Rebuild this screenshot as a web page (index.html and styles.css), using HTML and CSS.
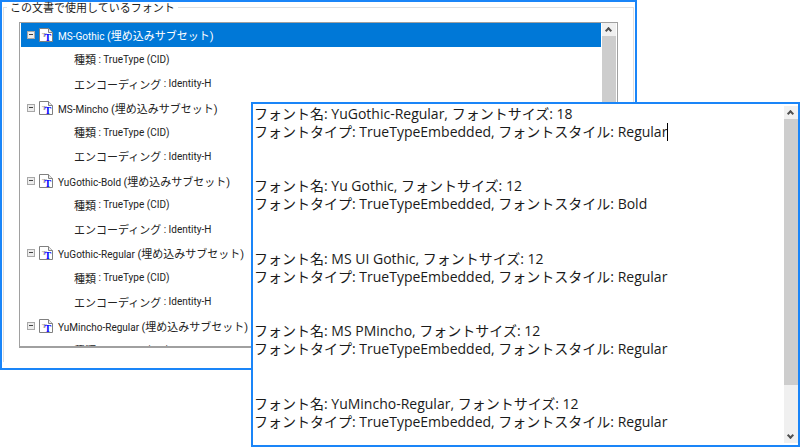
FILE: index.html
```html
<!DOCTYPE html>
<html lang="ja">
<head>
    <meta charset="UTF-8">
    <title>フォント</title>
    <link rel="stylesheet" href="styles.css">
</head>
<body>
    <svg class="defs" width="0" height="0">
        <symbol id="font-icon" viewBox="0 0 14 14">
            <path d="M.5 .5H9.5L13.5 4.5V13.5H.5Z" fill="#fff" stroke="#808080"/>
            <path d="M9.5 .5V4.5H13.5" fill="#e8e8e8" stroke="#808080"/>
            <text x="3" y="9" class="icon-t-back">T</text>
            <text x="5.5" y="12.5" class="icon-t">T</text>
        </symbol>
    </svg>

    <section class="window back-window">
        <fieldset class="group">
            <legend>この文書で使用しているフォント</legend>
            <div class="tree">
                <div class="tree-rows">
                    <div class="row selected"><span class="toggle"></span><svg class="icon"><use href="#font-icon"/></svg><span class="name">MS-Gothic <b>(埋め込みサブセット)</b></span></div>
                    <div class="row child"><b>種類</b> : TrueType (CID)</div>
                    <div class="row child"><b>エンコーディング</b> : Identity-H</div>
                    <div class="row"><span class="toggle"></span><svg class="icon"><use href="#font-icon"/></svg><span class="name">MS-Mincho <b>(埋め込みサブセット)</b></span></div>
                    <div class="row child"><b>種類</b> : TrueType (CID)</div>
                    <div class="row child"><b>エンコーディング</b> : Identity-H</div>
                    <div class="row"><span class="toggle"></span><svg class="icon"><use href="#font-icon"/></svg><span class="name">YuGothic-Bold <b>(埋め込みサブセット)</b></span></div>
                    <div class="row child"><b>種類</b> : TrueType (CID)</div>
                    <div class="row child"><b>エンコーディング</b> : Identity-H</div>
                    <div class="row"><span class="toggle"></span><svg class="icon"><use href="#font-icon"/></svg><span class="name">YuGothic-Regular <b>(埋め込みサブセット)</b></span></div>
                    <div class="row child"><b>種類</b> : TrueType (CID)</div>
                    <div class="row child"><b>エンコーディング</b> : Identity-H</div>
                    <div class="row"><span class="toggle"></span><svg class="icon"><use href="#font-icon"/></svg><span class="name">YuMincho-Regular <b>(埋め込みサブセット)</b></span></div>
                    <div class="row child"><b>種類</b> : TrueType (CID)</div>
                </div>
                <div class="scrollbar">
                    <span class="arrow up"></span>
                    <span class="thumb tree-thumb"></span>
                </div>
            </div>
        </fieldset>
    </section>

    <section class="window front-window">
        <div class="output">
            <p>フォント名: YuGothic-Regular, フォントサイズ: 18<br>フォントタイプ: TrueTypeEmbedded, フォントスタイル: Regular<span class="caret"></span></p>
            <p>フォント名: Yu Gothic, フォントサイズ: 12<br>フォントタイプ: TrueTypeEmbedded, フォントスタイル: Bold</p>
            <p>フォント名: MS UI Gothic, フォントサイズ: 12<br>フォントタイプ: TrueTypeEmbedded, フォントスタイル: Regular</p>
            <p>フォント名: MS PMincho, フォントサイズ: 12<br>フォントタイプ: TrueTypeEmbedded, フォントスタイル: Regular</p>
            <p>フォント名: YuMincho-Regular, フォントサイズ: 12<br>フォントタイプ: TrueTypeEmbedded, フォントスタイル: Regular</p>
        </div>
        <div class="scrollbar">
            <span class="arrow up"></span>
            <span class="thumb output-thumb"></span>
            <span class="track"></span>
            <span class="arrow down"></span>
        </div>
    </section>
</body>
</html>
```

FILE: styles.css
```css
html, body {
    margin: 0;
    padding: 0;
    height: 447px;
    overflow: hidden;
    background-color: #fff;
}

body {
    position: relative;
    font-family: "Open Sans", "Noto Sans CJK JP", sans-serif;
    color: #222;
}

.defs {
    position: absolute;
}

.window {
    position: absolute;
    box-sizing: border-box;
    background-color: #fff;
    border: 2px solid #1a85f8;
}

.back-window {
    left: 0;
    top: 0;
    width: 637px;
    height: 370px;
    padding: 0 1px;
}

.front-window {
    left: 251px;
    top: 102px;
    width: 549px;
    height: 345px;
    display: flex;
}

/* group box */
.group {
    margin: 0;
    padding: 9px 15px 0 15px;
    height: 360px;
    box-sizing: border-box;
    border: 1px solid #e0e0e0;
    border-bottom: none;
    min-width: 0;
}

.group legend {
    margin-left: -12px;
    padding: 0 3px;
    font-size: 11px;
    line-height: 11px;
    color: #222;
}

/* tree */
.tree {
    display: flex;
    width: 599px;
    height: 326px;
    box-sizing: border-box;
    border: 1px solid #a0a0a0;
    border-bottom-width: 2px;
    padding-left: 1px;
}

.tree-rows {
    width: 580px;
    overflow: hidden;
}

.row {
    display: flex;
    align-items: center;
    height: 24.25px;
    font-family: Roboto, "Noto Sans CJK JP", sans-serif;
    font-size: 10px;
    white-space: pre;
}

.row b {
    font-weight: 400;
    font-size: 11px;
}

.row.child {
    padding-left: 53px;
}

.row.selected {
    background-color: #0078d7;
    color: #fff;
}

.toggle {
    position: relative;
    box-sizing: border-box;
    width: 8px;
    height: 8px;
    margin-left: 6px;
    border: 1px solid #a8a8a8;
    background-color: #ececec;
}

.toggle::after {
    content: "";
    position: absolute;
    left: 1px;
    top: 2px;
    width: 4px;
    height: 1px;
    background-color: #404040;
}

.icon {
    width: 14px;
    height: 14px;
    margin-left: 4px;
}

.icon-t {
    font: bold 10px "Liberation Serif", serif;
    fill: #0000ff;
}

.icon-t-back {
    font: bold 7px "Liberation Serif", serif;
    fill: #9a9a9a;
}

.name {
    margin-left: 5px;
}

/* scrollbars */
.scrollbar {
    display: flex;
    flex-direction: column;
    width: 14px;
    flex-shrink: 0;
    background-color: #f0f0f0;
}

.tree .scrollbar {
    margin-left: 1px;
}

.front-window .scrollbar {
    margin-left: auto;
    margin-top: 2px;
    margin-bottom: 2px;
    margin-right: 0;
}

.arrow {
    position: relative;
    height: 13px;
    flex-shrink: 0;
}

.arrow::after {
    content: "";
    position: absolute;
    left: 4px;
    width: 5px;
    height: 5px;
    box-sizing: border-box;
    border: solid #505050;
    border-width: 2px 0 0 2px;
}

.arrow.up::after {
    top: 5px;
    transform: rotate(45deg);
}

.arrow.down::after {
    top: 3px;
    transform: rotate(225deg);
}

.thumb {
    display: block;
    background-color: #cdcdcd;
}

.tree-thumb {
    flex-grow: 1;
}

.output-thumb {
    height: 266px;
}

.track {
    flex-grow: 1;
}

/* text output */
.output {
    padding: 0.5px 0 0 1px;
    font-size: 14px;
    line-height: 18.15px;
    color: #1a1a1a;
    white-space: nowrap;
}

.output p {
    margin: 0 0 36.3px 0;
}

.caret {
    display: inline-block;
    width: 1px;
    height: 18px;
    vertical-align: -4px;
    background-color: #000;
}
```
